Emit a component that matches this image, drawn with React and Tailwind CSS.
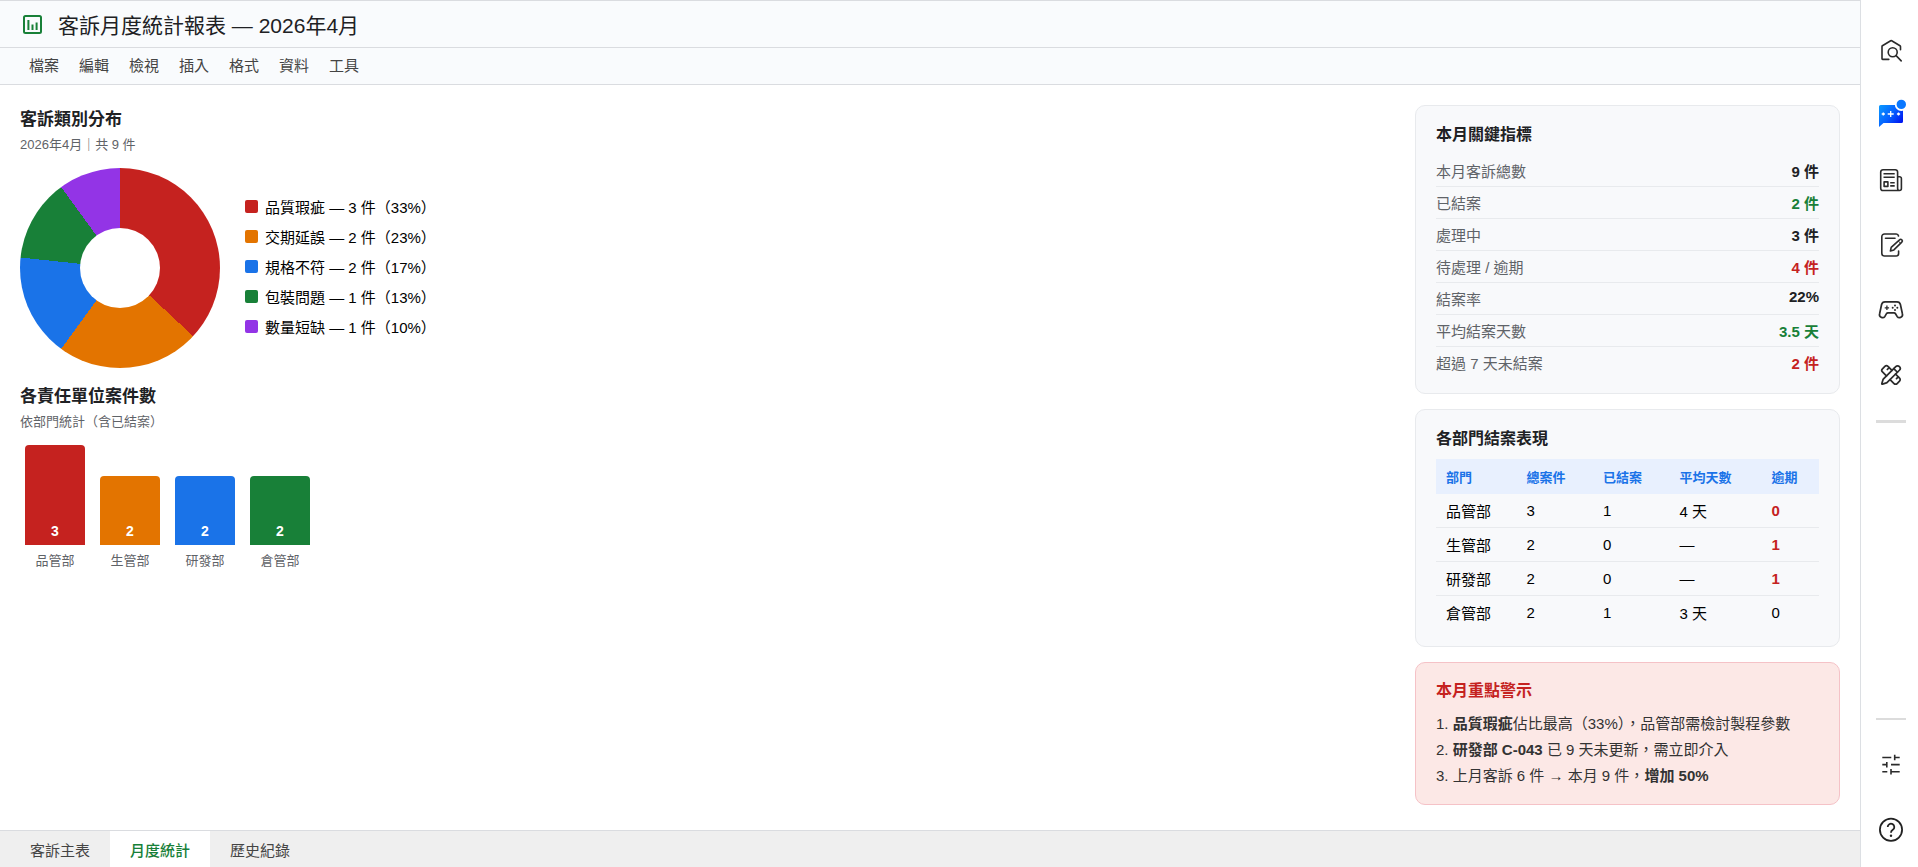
import { PencilRuler } from 'lucide-react';

const menuItems = ['檔案', '編輯', '檢視', '插入', '格式', '資料', '工具'];

const tabs = [
  { name: '客訴主表', active: false },
  { name: '月度統計', active: true },
  { name: '歷史紀錄', active: false },
];

const categories = [
  { label: '品質瑕疵 — 3 件（33%）', color: 'bg-[#c5221f]' },
  { label: '交期延誤 — 2 件（23%）', color: 'bg-[#e37400]' },
  { label: '規格不符 — 2 件（17%）', color: 'bg-[#1a73e8]' },
  { label: '包裝問題 — 1 件（13%）', color: 'bg-[#188038]' },
  { label: '數量短缺 — 1 件（10%）', color: 'bg-[#9334e6]' },
];

const departments = [
  { name: '品管部', count: 3, height: 100, color: 'bg-[#c5221f]' },
  { name: '生管部', count: 2, height: 69, color: 'bg-[#e37400]' },
  { name: '研發部', count: 2, height: 69, color: 'bg-[#1a73e8]' },
  { name: '倉管部', count: 2, height: 69, color: 'bg-[#188038]' },
];

const metrics = [
  { label: '本月客訴總數', value: '9 件', color: 'text-[#202124]' },
  { label: '已結案', value: '2 件', color: 'text-[#188038]' },
  { label: '處理中', value: '3 件', color: 'text-[#202124]' },
  { label: '待處理 / 逾期', value: '4 件', color: 'text-[#c5221f]' },
  { label: '結案率', value: '22%', color: 'text-[#202124]' },
  { label: '平均結案天數', value: '3.5 天', color: 'text-[#188038]' },
  { label: '超過 7 天未結案', value: '2 件', color: 'text-[#c5221f]' },
];

const performance = [
  { name: '品管部', total: 3, closed: 1, days: '4 天', overdue: 0, alert: true },
  { name: '生管部', total: 2, closed: 0, days: '—', overdue: 1, alert: true },
  { name: '研發部', total: 2, closed: 0, days: '—', overdue: 1, alert: true },
  { name: '倉管部', total: 2, closed: 1, days: '3 天', overdue: 0, alert: false },
];

function LogoIcon() {
  return (
    <svg viewBox="0 0 24 24" className="size-6" fill="none" stroke="#188038" strokeWidth="2">
      <rect x="4" y="4" width="17" height="17" rx="1.5" />
      <path d="M8.4 8v10M12.5 12.6V18M16.6 10.6V18" />
    </svg>
  );
}

function HomeSearchIcon() {
  return (
    <svg viewBox="0 0 28 28" className="size-7" fill="none" stroke="#2b2b2b" strokeWidth="1.6" strokeLinecap="round" strokeLinejoin="round">
      <path d="M11.8 23.4H5.6a.6.6 0 0 1-.6-.6V10.4c0-.3.1-.5.4-.7l8.3-4.9a1 1 0 0 1 1 0l8.3 4.9c.3.2.5.4.5.7v3.4" />
      <circle cx="15.7" cy="16.2" r="4.5" />
      <path d="m19.1 19.6 5.1 5.3" />
    </svg>
  );
}

function ChatIcon() {
  return (
    <svg viewBox="0 0 28 28" className="size-7 overflow-visible">
      <defs>
        <linearGradient id="chat" x1="0" y1="0" x2="1" y2="0.7">
          <stop offset="0" stopColor="#0a9bff" />
          <stop offset="0.55" stopColor="#0560ff" />
          <stop offset="1" stopColor="#0016f0" />
        </linearGradient>
      </defs>
      <path d="M3.6 4h20.8A1.6 1.6 0 0 1 26 5.6v14.8a1.6 1.6 0 0 1-1.6 1.6H6.5L2 26V5.6A1.6 1.6 0 0 1 3.6 4z" fill="url(#chat)" />
      <path d="M13.7 10v6M10.7 13h6M6.3 11.4v3.2M4.7 13h3.2M21.5 11.4v3.2M19.9 13h3.2" stroke="#fff" strokeWidth="1.3" />
      <circle cx="24.3" cy="3.4" r="5.6" fill="#0a78ff" stroke="#fff" strokeWidth="1.8" />
    </svg>
  );
}

function NewsIcon() {
  return (
    <svg viewBox="0 0 28 28" className="size-7" fill="none" stroke="#2b2b2b" strokeWidth="1.6" strokeLinejoin="round">
      <path d="M22.5 24.5H6a2.3 2.3 0 0 1-2.3-2.3V6A2.3 2.3 0 0 1 6 3.7h12.3A2.3 2.3 0 0 1 20.6 6v16.2c0 1.3.7 2.3 1.9 2.3 1.1 0 1.9-.9 1.9-2V12.5a1.8 1.8 0 0 0-1.8-1.8h-2" />
      <path d="M6.5 7.7h11.2M6.5 11.2h11.2M13.2 16.8h4.5M13.2 19.9h4.5" />
      <rect x="7.1" y="15.9" width="3.8" height="4.5" />
    </svg>
  );
}

function NoteIcon() {
  return (
    <svg viewBox="0 0 28 28" className="size-7" fill="none" stroke="#2b2b2b" strokeWidth="1.6" strokeLinecap="round" strokeLinejoin="round">
      <path d="M21.5 5A2.4 2.4 0 0 0 19.2 3H7.5a2.7 2.7 0 0 0-2.7 2.7v16.6A2.7 2.7 0 0 0 7.5 25h11.7a2.4 2.4 0 0 0 2.4-2.4V20" />
      <path d="M8.5 7.3H18" />
      <path d="m13.4 20 .8-3.7 8.3-7.5a1.6 1.6 0 0 1 2.3 2.4l-7.9 7.7z" />
      <path d="m21.3 10 2.3 2.3" strokeWidth="1" />
    </svg>
  );
}

function GamepadIcon() {
  return (
    <svg viewBox="0 0 28 28" className="size-7" fill="none" stroke="#2b2b2b" strokeWidth="1.7" strokeLinejoin="round">
      <path d="M8 5.8h12a3.5 3.5 0 0 1 3.4 2.7l2 9.3a3 3 0 0 1-5.3 2.6l-1.6-2.7a1.8 1.8 0 0 0-1.5-.9h-6a1.8 1.8 0 0 0-1.5.9l-1.6 2.7a3 3 0 0 1-5.3-2.6l2-9.3A3.5 3.5 0 0 1 8 5.8z" />
      <path d="M9.9 9.6V14M7.7 11.8h4.4" strokeWidth="1.3" />
      <g fill="#2b2b2b" stroke="none">
        <circle cx="18" cy="9.5" r="1" />
        <circle cx="18" cy="14.1" r="1" />
        <circle cx="15.7" cy="11.8" r="1" />
        <circle cx="20.3" cy="11.8" r="1" />
      </g>
    </svg>
  );
}

function TuneIcon() {
  return (
    <svg viewBox="0 0 28 28" className="size-7" fill="none" stroke="#2b2b2b" strokeWidth="1.6">
      <path d="M5.3 7.5h9M17.7 4.8v5.5M17.7 7.5h5M5.3 14.6h4.5M9.8 11.9v5.5M14 14.6h8.7M5.3 21.8h5M14 19v5.6M14 21.8h8.7" />
    </svg>
  );
}

function HelpIcon() {
  return (
    <svg viewBox="0 0 28 28" className="size-7" fill="none" stroke="#222" strokeWidth="1.8">
      <circle cx="14" cy="14.8" r="11.1" />
      <path d="M10.7 12a3.3 3.3 0 1 1 5.1 2.8c-1.2.8-1.8 1.4-1.8 2.7v.3" />
      <circle cx="14" cy="20.7" r="1.2" fill="#222" stroke="none" />
    </svg>
  );
}

function SideButton({ label, children }) {
  return (
    <button type="button" aria-label={label} className="flex size-7 items-center justify-center">
      {children}
    </button>
  );
}

function Sidebar() {
  return (
    <aside className="flex w-[58px] shrink-0 flex-col items-center border-l border-[#dcdfe3] bg-white pt-9 pb-6 pl-[3px]">
      <div className="flex flex-col gap-[37px]">
        <SideButton label="首頁搜尋"><HomeSearchIcon /></SideButton>
        <SideButton label="聊天"><ChatIcon /></SideButton>
        <SideButton label="新聞"><NewsIcon /></SideButton>
        <SideButton label="筆記"><NoteIcon /></SideButton>
        <SideButton label="遊戲"><GamepadIcon /></SideButton>
        <SideButton label="設計工具">
          <PencilRuler className="size-[22px] text-[#2b2b2b]" strokeWidth={1.9} />
        </SideButton>
      </div>
      <div className="mt-[31px] h-[3px] w-[30px] bg-[#dcdcdc]" />
      <div className="mt-auto h-[2px] w-[30px] bg-[#dcdcdc]" />
      <div className="mt-[30px] flex flex-col gap-[37px]">
        <SideButton label="設定"><TuneIcon /></SideButton>
        <SideButton label="說明"><HelpIcon /></SideButton>
      </div>
    </aside>
  );
}

function SectionTitle({ title, subtitle }) {
  return (
    <>
      <h2 className="text-[17px] font-bold text-[#202124]">{title}</h2>
      <p className="mt-1 mb-[15px] text-[13px] text-[#5f6368]">{subtitle}</p>
    </>
  );
}

function CategoryChart() {
  return (
    <section>
      <SectionTitle title="客訴類別分布" subtitle="2026年4月｜共 9 件" />
      <div className="flex items-center gap-[25px]">
        <div className="flex size-[200px] items-center justify-center rounded-full bg-[conic-gradient(#c5221f_0deg_133deg,#e37400_133deg_216deg,#1a73e8_216deg_276deg,#188038_276deg_324deg,#9334e6_324deg_360deg)]">
          <div className="size-20 rounded-full bg-white" />
        </div>
        <ul className="flex flex-col gap-[9px] pb-[3px]">
          {categories.map((item) => (
            <li key={item.label} className="flex items-center gap-[7px] text-[15px] text-black">
              <span className={`size-[13px] rounded-xs ${item.color}`} />
              {item.label}
            </li>
          ))}
        </ul>
      </div>
    </section>
  );
}

function DepartmentChart() {
  return (
    <section className="mt-[14px]">
      <SectionTitle title="各責任單位案件數" subtitle="依部門統計（含已結案）" />
      <div className="flex items-end gap-[15px] px-[5px]">
        {departments.map((dept) => (
          <div key={dept.name} className="flex w-[60px] flex-col items-center">
            <div
              className={`flex w-full items-end justify-center rounded-t pb-1 text-sm font-bold text-white ${dept.color}`}
              style={{ height: dept.height }}
            >
              {dept.count}
            </div>
            <p className="mt-[5px] text-[13px] text-[#5f6368]">{dept.name}</p>
          </div>
        ))}
      </div>
    </section>
  );
}

function Card({ title, children }) {
  return (
    <section className="rounded-[10px] border border-[#e8eaed] bg-[#f8f9fb] px-5 pt-[17px] pb-[15px]">
      <h3 className="mb-2 text-base leading-6 font-bold text-[#202124]">{title}</h3>
      {children}
    </section>
  );
}

function MetricsCard() {
  return (
    <Card title="本月關鍵指標">
      <dl>
        {metrics.map((metric) => (
          <div
            key={metric.label}
            className="flex justify-between border-b border-[#e8eaed] py-[5px] text-[15px] last:border-b-0"
          >
            <dt className="text-[#5f6368]">{metric.label}</dt>
            <dd className={`font-bold ${metric.color}`}>{metric.value}</dd>
          </div>
        ))}
      </dl>
    </Card>
  );
}

function PerformanceCard() {
  return (
    <Card title="各部門結案表現">
      <table className="mb-[2px] w-full border-collapse text-left text-[15px] text-black">
        <thead className="bg-[#e8f0fe] text-[13px] text-[#1a73e8]">
          <tr>
            <th className="w-[21%] px-[10px] py-2 font-bold">部門</th>
            <th className="w-[20%] px-[10px] py-2 font-bold">總案件</th>
            <th className="w-[20%] px-[10px] py-2 font-bold">已結案</th>
            <th className="w-[24%] px-[10px] py-2 font-bold">平均天數</th>
            <th className="w-[15%] px-[10px] py-2 font-bold">逾期</th>
          </tr>
        </thead>
        <tbody>
          {performance.map((row) => (
            <tr key={row.name} className="border-b border-[#e8eaed] last:border-b-0">
              <td className="px-[10px] py-[6px]">{row.name}</td>
              <td className="px-[10px] py-[6px]">{row.total}</td>
              <td className="px-[10px] py-[6px]">{row.closed}</td>
              <td className="px-[10px] py-[6px]">{row.days}</td>
              <td className={`px-[10px] py-[6px] ${row.alert ? 'font-bold text-[#c5221f]' : ''}`}>
                {row.overdue}
              </td>
            </tr>
          ))}
        </tbody>
      </table>
    </Card>
  );
}

function AlertCard() {
  return (
    <section className="rounded-[10px] border border-[#f5c2c7] bg-[#fce8e6] px-5 pt-4 pb-[15px]">
      <h3 className="mb-2 text-base leading-6 font-bold text-[#c5221f]">本月重點警示</h3>
      <div className="text-[15px] leading-[26px] text-[#333]">
        <p>1. <strong>品質瑕疵</strong>佔比最高（33%），品管部需檢討製程參數</p>
        <p>2. <strong>研發部 C-043</strong> 已 9 天未更新，需立即介入</p>
        <p>3. 上月客訴 6 件 → 本月 9 件，<strong>增加 50%</strong></p>
      </div>
    </section>
  );
}

function App() {
  return (
    <div
      lang="zh-Hant"
      className="flex min-h-screen bg-white font-['Liberation_Sans','Noto_Sans_CJK_TC',sans-serif] leading-[normal]"
    >
      <div className="flex min-w-0 flex-1 flex-col">
        <header className="flex h-12 items-center gap-[14px] border-y border-[#dadce0] bg-[#f9fbfd] px-5">
          <LogoIcon />
          <h1 className="text-[21px] text-[#202124]">客訴月度統計報表 — 2026年4月</h1>
        </header>
        <nav className="flex h-[37px] items-center border-b border-[#dadce0] bg-[#f9fbfd] px-[19px] pb-1">
          {menuItems.map((item) => (
            <button key={item} type="button" className="px-[10px] text-[15px] text-[#444]">
              {item}
            </button>
          ))}
        </nav>

        <main className="flex flex-1 gap-5 p-5">
          <div className="min-w-0 flex-1">
            <CategoryChart />
            <DepartmentChart />
          </div>
          <div className="flex w-[425px] shrink-0 flex-col gap-[15px]">
            <MetricsCard />
            <PerformanceCard />
            <AlertCard />
          </div>
        </main>

        <footer className="flex h-[37px] border-t border-[#dadce0] bg-[#efefef] px-[10px]">
          {tabs.map((tab) => (
            <button
              key={tab.name}
              type="button"
              className={`px-5 text-[15px] ${
                tab.active ? 'bg-white font-medium text-[#188038]' : 'text-[#444]'
              }`}
            >
              {tab.name}
            </button>
          ))}
        </footer>
      </div>
      <Sidebar />
    </div>
  );
}

export default App;
